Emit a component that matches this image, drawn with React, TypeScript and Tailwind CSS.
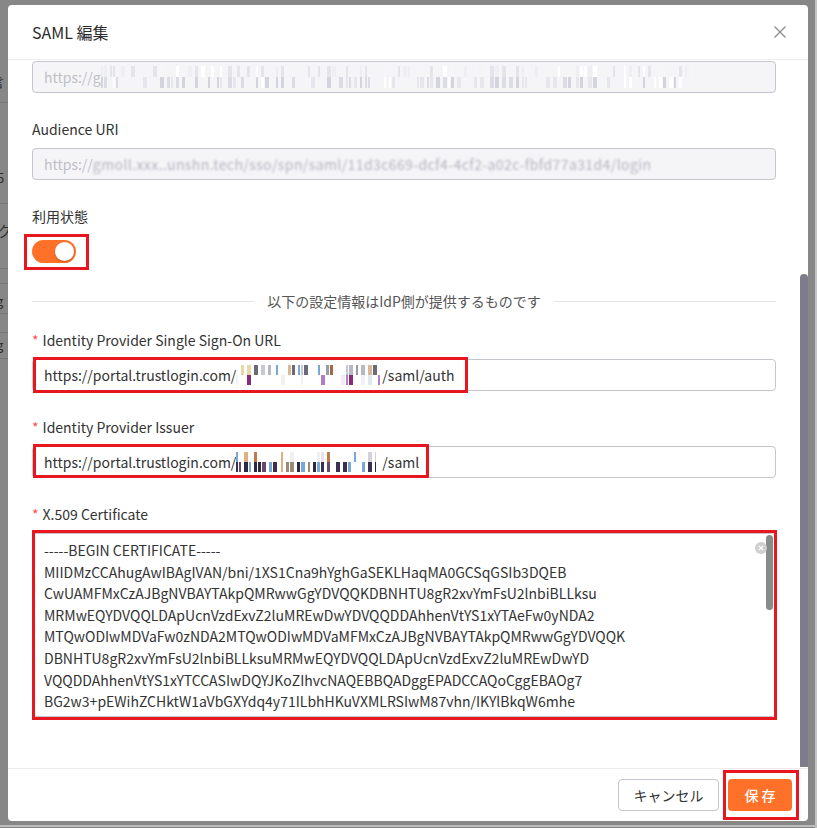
import React from "react";

function rng(seed: number) {
  let s = seed;
  return () => {
    s = (s * 16807) % 2147483647;
    return (s - 1) / 2147483646;
  };
}

interface MosaicProps {
  w: number;
  h: number;
  seed: number;
  top: string[];
  bottom: string[];
  topFill: number;
  bottomFill: number;
}

// redacted part of a URL, drawn as a pixel mosaic
function Mosaic({ w, h, seed, top, bottom, topFill, bottomFill }: MosaicProps) {
  const r = rng(seed);
  const cols: { x: number; cw: number; t: string | null; b: string | null }[] = [];
  let x = 0;
  while (x < w) {
    const cw = 2 + Math.floor(r() * 3);
    const t = r() < topFill ? top[Math.floor(r() * top.length)] : null;
    const b = r() < bottomFill ? bottom[Math.floor(r() * bottom.length)] : null;
    cols.push({ x, cw, t, b });
    x += cw + (r() < 0.5 ? 1 : 3);
  }
  const half = Math.round(h / 2);
  return (
    <svg width={w} height={h} className="shrink-0">
      {cols.map((c, i) => (
        <g key={i}>
          {c.t && <rect x={c.x} y={0} width={c.cw} height={half} fill={c.t} />}
          {c.b && <rect x={c.x} y={half} width={c.cw} height={h - half} fill={c.b} />}
        </g>
      ))}
    </svg>
  );
}

function RedBox({ className }: { className: string }) {
  return <div className={`absolute border-[3px] border-[#e8161e] pointer-events-none ${className}`} />;
}

function Label({ text, required }: { text: string; required?: boolean }) {
  return (
    <div className="h-[22px] leading-[22px] text-[14px] text-[#333]">
      {required && <span className="text-[#ff4d4f] mr-[4px]">*</span>}
      {text}
    </div>
  );
}

const cert = [
  "-----BEGIN CERTIFICATE-----",
  "MIIDMzCCAhugAwIBAgIVAN/bni/1XS1Cna9hYghGaSEKLHaqMA0GCSqGSIb3DQEB",
  "CwUAMFMxCzAJBgNVBAYTAkpQMRwwGgYDVQQKDBNHTU8gR2xvYmFsU2lnbiBLLksu",
  "MRMwEQYDVQQLDApUcnVzdExvZ2luMREwDwYDVQQDDAhhenVtYS1xYTAeFw0yNDA2",
  "MTQwODIwMDVaFw0zNDA2MTQwODIwMDVaMFMxCzAJBgNVBAYTAkpQMRwwGgYDVQQK",
  "DBNHTU8gR2xvYmFsU2lnbiBLLksuMRMwEQYDVQQLDApUcnVzdExvZ2luMREwDwYD",
  "VQQDDAhhenVtYS1xYTCCASIwDQYJKoZIhvcNAQEBBQADggEPADCCAQoCggEBAOg7",
  "BG2w3+pEWihZCHktW1aVbGXYdq4y71ILbhHKuVXMLRSIwM87vhn/IKYlBkqW6mhe",
];

export default function App() {
  return (
    <div className="relative w-[817px] h-[828px] overflow-hidden bg-[#878787] font-['Noto_Sans_CJK_JP','Noto_Sans',sans-serif]">
      {/* page behind the overlay, only a sliver shows */}
      <div className="absolute left-0 top-0 w-[8px] h-full overflow-hidden text-[#2e2e2e]">
        <span className="absolute left-[-9px] top-[72px] text-[13px]">言</span>
        <div className="absolute left-0 top-[102px] w-full h-px bg-[#767676]" />
        <span className="absolute left-[-3px] top-[168px] text-[13px]">5</span>
        <div className="absolute left-0 top-[203px] w-full h-px bg-[#767676]" />
        <span className="absolute left-[-3px] top-[220px] text-[15px]">ク</span>
        <div className="absolute left-0 top-[268px] w-full h-px bg-[#767676]" />
        <div className="absolute left-0 top-[283px] w-full h-px bg-[#767676]" />
        <span className="absolute left-[-4px] top-[291px] text-[13px]">g</span>
        <div className="absolute left-0 top-[313px] w-full h-px bg-[#767676]" />
        <div className="absolute left-0 top-[332px] w-full h-px bg-[#767676]" />
        <span className="absolute left-[-4px] top-[335px] text-[13px]">g</span>
        <div className="absolute left-0 top-[358px] w-full h-px bg-[#767676]" />
      </div>
      <div className="absolute right-0 top-0 w-[2px] h-full bg-[#c4c4c4]" />
      <div className="absolute left-0 bottom-[1px] w-full h-[2px] bg-[#bdbdbd]" />

      <div className="relative ml-[8px] mt-[5px] w-[800px] h-[816px] bg-white rounded-[4px] flex flex-col">
        <div className="h-[55px] shrink-0 border-b border-[#ececec] flex items-center justify-between pl-[24px] pr-[22px]">
          <span className="text-[16px] font-normal text-[#2a2a2a]">SAML 編集</span>
          <svg width="12" height="12" viewBox="0 0 12 12" className="text-[#8c8c8c]">
            <path d="M0.5 0.5 L11.5 11.5 M11.5 0.5 L0.5 11.5" stroke="currentColor" strokeWidth="1.3" fill="none" />
          </svg>
        </div>

        <div className="relative flex-1 overflow-hidden pl-[24px] pr-[32px] pt-[1px]">
          <div className="w-[744px] h-[32px] rounded-[4px] border border-[#c6c6ce] bg-[#f5f5f7] flex items-center px-[11px] text-[14px] text-[#c0c0c8]">
            <span>https://g</span>
            <Mosaic
              w={592}
              h={22}
              seed={11}
              top={["#ffffff", "#eeeef3", "#e4e4ea", "#f6f6f8"]}
              bottom={["#dcdce4", "#e6e6ec", "#ffffff", "#d4d4dc"]}
              topFill={0.6}
              bottomFill={0.7}
            />
          </div>

          <div className="mt-[25px]">
            <Label text="Audience URI" />
            <div className="mt-[8px] w-[744px] h-[32px] rounded-[4px] border border-[#c6c6ce] bg-[#f5f5f7] flex items-center px-[11px] text-[14px] text-[#c0c0c8] whitespace-nowrap overflow-hidden">
              <span>https://</span>
              <span className="blur-[0.9px] text-[#b4b4c0] tracking-[0.4px]">gmoll.xxx..unshn.tech/sso/spn/saml/11d3c669-dcf4-4cf2-a02c-fbfd77a31d4/login</span>
            </div>
          </div>

          <div className="mt-[25px]">
            <Label text="利用状態" />
            <div className="mt-[8px] h-[32px] flex items-center">
              <div className="relative">
                <div className="w-[44px] h-[23px] rounded-full bg-[#ff7029] relative">
                  <div className="absolute right-[2px] top-[2px] w-[19px] h-[19px] rounded-full bg-white shadow-[0_1px_2px_rgba(0,0,0,0.25)]" />
                </div>
                <RedBox className="left-[-8px] top-[-6px] w-[65px] h-[36px]" />
              </div>
            </div>
          </div>

          <div className="mt-[25px] h-[18px] flex items-center gap-[13px]">
            <div className="flex-1 h-px bg-[#e6e6e6]" />
            <span className="text-[14px] text-[#555] leading-[18px]">以下の設定情報はIdP側が提供するものです</span>
            <div className="flex-1 h-px bg-[#e6e6e6]" />
          </div>

          <div className="mt-[19px]">
            <Label text="Identity Provider Single Sign-On URL" required />
            <div className="relative mt-[8px]">
              <div className="w-[744px] h-[32px] rounded-[4px] border border-[#c6c6ce] bg-white flex items-center px-[11px] text-[14px] text-[#333] whitespace-nowrap">
                <span>https://portal.trustlogin.com/</span>
                <Mosaic
                  w={146}
                  h={20}
                  seed={7}
                  top={["#9a9aa8", "#d8b896", "#7aa6dc", "#a26a4a", "#c8c8d4", "#6a6a7a", "#e8d8a8", "#b8b8c4"]}
                  bottom={["#f0eef4", "#f4f0f0", "#8a2a7a", "#e0e8f0", "#b080c0", "#f2f2f6"]}
                  topFill={0.75}
                  bottomFill={0.3}
                />
                <span>/saml/auth</span>
              </div>
              <RedBox className="left-[1px] top-[-2px] w-[435px] h-[36px]" />
            </div>
          </div>

          <div className="mt-[25px]">
            <Label text="Identity Provider Issuer" required />
            <div className="relative mt-[8px]">
              <div className="w-[744px] h-[32px] rounded-[4px] border border-[#c6c6ce] bg-white flex items-center px-[11px] text-[14px] text-[#333] whitespace-nowrap">
                <span>https://portal.trustlogin.com/</span>
                <Mosaic
                  w={140}
                  h={20}
                  seed={23}
                  top={["#f0f0f4", "#e8e4e8", "#7aa6dc", "#c07a4a", "#d8d0d8", "#e0b080", "#ffffff"]}
                  bottom={["#2a2a48", "#2a2a48", "#3a3050", "#6a4a6a", "#7aa6dc", "#e0b080", "#9a8a7a", "#2a2a48"]}
                  topFill={0.45}
                  bottomFill={0.85}
                />
                <span className="ml-[6px]">/saml</span>
              </div>
              <RedBox className="left-[1px] top-[-2px] w-[396px] h-[34px]" />
            </div>
          </div>

          <div className="mt-[25px]">
            <Label text="X.509 Certificate" required />
            <div className="relative mt-[8px]">
              <div className="relative w-[744px] h-[184px] rounded-[4px] border border-[#c6c6ce] bg-white overflow-hidden px-[11px] py-[6px] text-[14px] leading-[21.6px] text-[#333] whitespace-pre">
                {cert.map((line) => (
                  <div key={line}>{line}</div>
                ))}
                <div className="absolute right-[2px] top-[1px] w-[7px] h-[75px] rounded-full bg-[#8a8a8a]" />
                <div className="absolute right-[8px] top-[8px] w-[12px] h-[12px] rounded-full bg-[#cfcfcf] flex items-center justify-center">
                  <svg width="6" height="6" viewBox="0 0 6 6">
                    <path d="M0.8 0.8 L5.2 5.2 M5.2 0.8 L0.8 5.2" stroke="white" strokeWidth="1.2" />
                  </svg>
                </div>
              </div>
              <RedBox className="left-0 top-[-3px] w-[745px] h-[190px]" />
            </div>
          </div>

          <div className="absolute right-0 top-[214px] w-[8px] h-[493px] rounded-t-full bg-[#7e7c8b]" />
        </div>

        <div className="h-[53px] shrink-0 border-t border-[#ececec] flex items-center justify-end gap-[9px] pr-[16px]">
          <button className="h-[32px] w-[101px] rounded-[4px] border border-[#c6c6ce] bg-white text-[14px] text-[#333]">
            キャンセル
          </button>
          <div className="relative">
            <button className="h-[32px] w-[64px] rounded-[4px] bg-[#ff7029] text-[14px] font-medium text-white tracking-[3px] pl-[3px]">
              保存
            </button>
            <RedBox className="left-[-5px] top-[-9px] w-[76px] h-[50px]" />
          </div>
        </div>
      </div>
    </div>
  );
}
